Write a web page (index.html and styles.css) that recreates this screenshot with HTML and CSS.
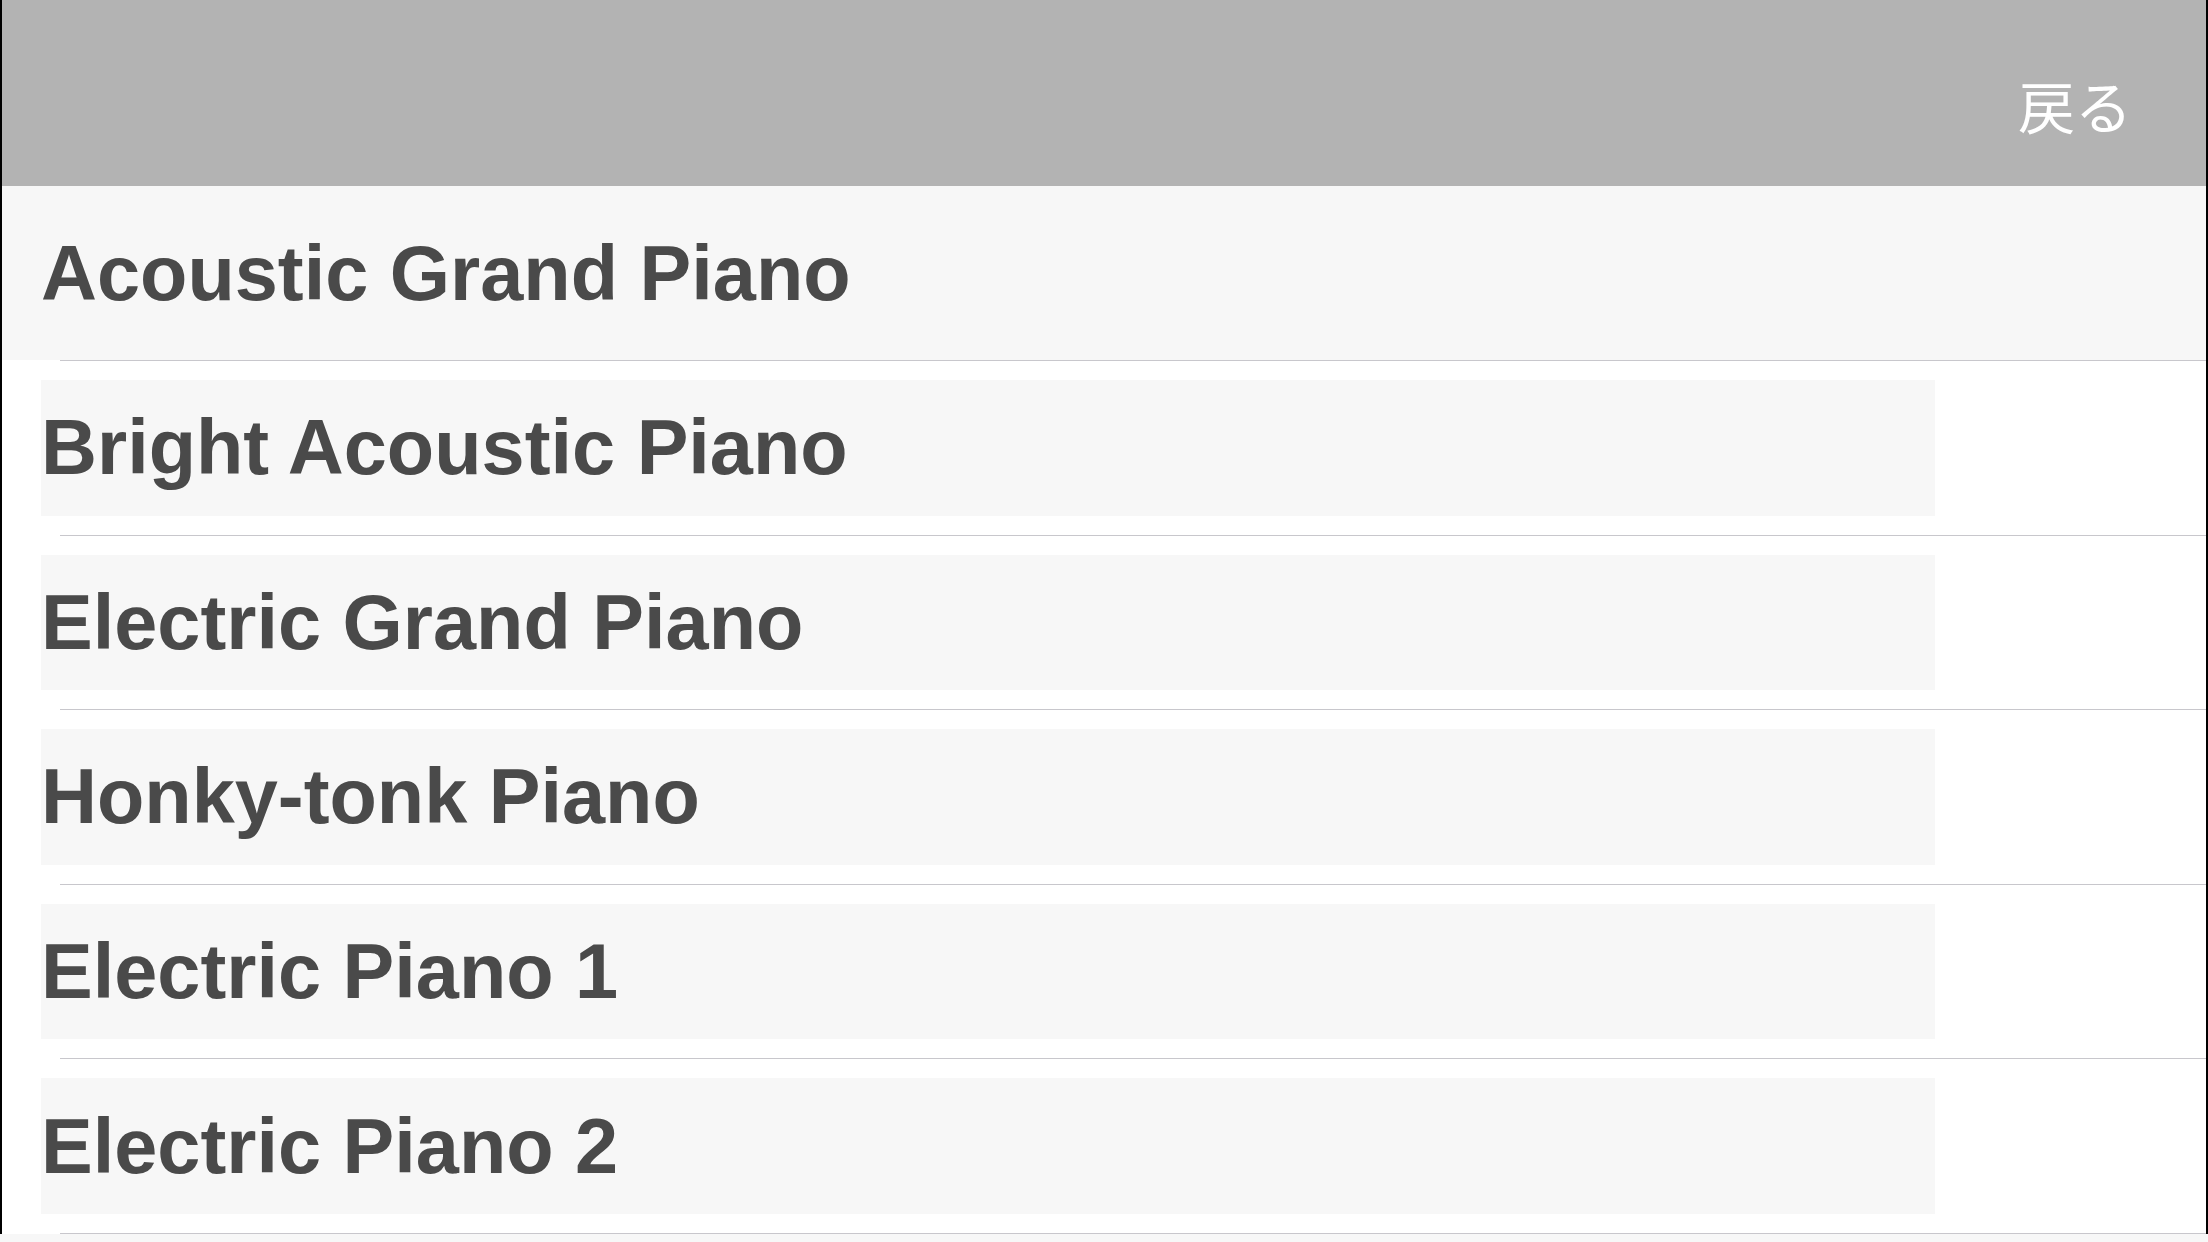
FILE: index.html
```html
<!DOCTYPE html>
<html lang="ja">
<head>
    <meta charset="UTF-8">
    <meta name="viewport" content="width=device-width, initial-scale=1.0">
    <title>Instruments</title>
    <link rel="stylesheet" href="styles.css">
</head>
<body>
    <div class="frame">
        <div class="navbar">
            <a class="back" href="#">戻る</a>
        </div>
        <ul class="list">
            <li class="row selected"><span class="name">Acoustic Grand Piano</span></li>
            <li class="sep"></li>
            <li class="row"><span class="name">Bright Acoustic Piano</span></li>
            <li class="sep"></li>
            <li class="row"><span class="name">Electric Grand Piano</span></li>
            <li class="sep"></li>
            <li class="row"><span class="name">Honky-tonk Piano</span></li>
            <li class="sep"></li>
            <li class="row"><span class="name">Electric Piano 1</span></li>
            <li class="sep"></li>
            <li class="row"><span class="name">Electric Piano 2</span></li>
            <li class="sep"></li>
        </ul>
    </div>
    <div class="bottom"></div>
</body>
</html>
```

FILE: styles.css
```css
body {
    margin: 0;
    padding: 0;
    background-color: #000;
    font-family: "Liberation Sans", Arial, sans-serif;
    overflow: hidden;
}

.frame {
    margin: 0 2px;
    height: 1234px;
    background-color: #fff;
    overflow: hidden;
}

.navbar {
    height: 186px;
    box-sizing: border-box;
    background-color: #b3b3b3;
    display: flex;
    justify-content: flex-end;
    padding: 76px 74px 0 0;
}

.back {
    font-family: "Noto Sans CJK JP", sans-serif;
    font-weight: normal;
    font-size: 57px;
    line-height: 57px;
    height: 57px;
    color: #fff;
    text-decoration: none;
}

.list {
    list-style: none;
    margin: 0;
    padding: 0;
}

.row {
    box-sizing: border-box;
    height: 173.6px;
    padding: 19px 0;
    display: flex;
    align-items: stretch;
}

.name {
    width: 1894px;
    margin-left: 39px;
    background-color: #f7f7f7;
    display: flex;
    align-items: center;
    font-size: 77.5px;
    font-weight: bold;
    color: #4a4a4a;
}

.row.selected {
    height: 174px;
    padding: 0;
    background-color: #f7f7f7;
}

.sep {
    height: 1px;
    margin-left: 58px;
    background-color: #c8c7cc;
}

.bottom {
    height: 8px;
    background-color: #f7f7f7;
}
```
